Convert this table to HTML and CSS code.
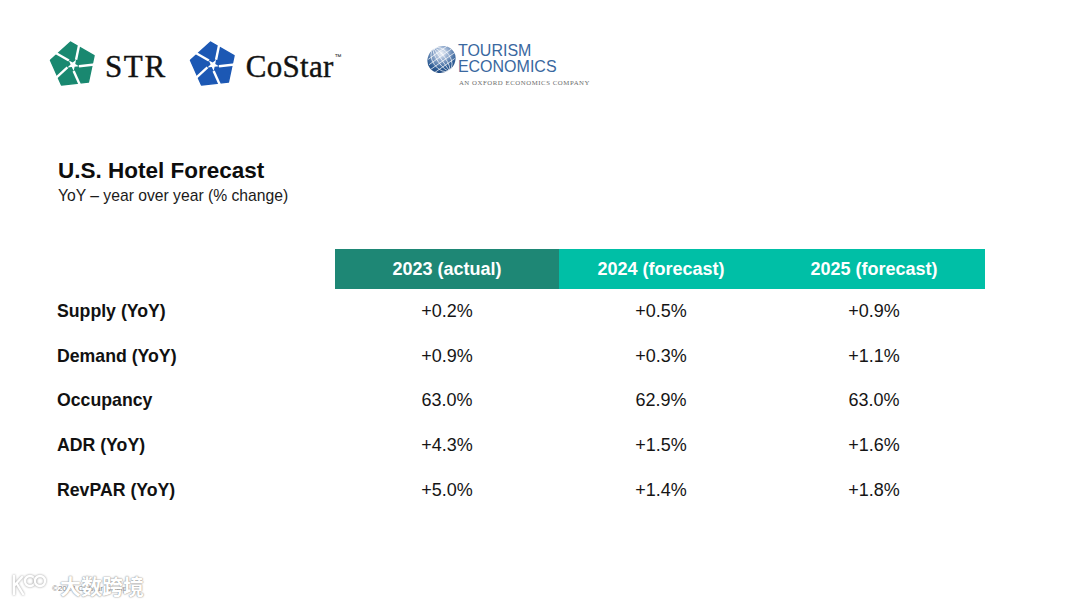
FILE: index.html
```html
<!DOCTYPE html>
<html lang="en">
<head>
<meta charset="utf-8">
<title>U.S. Hotel Forecast</title>
<link rel="stylesheet" href="styles.css">
</head>
<body>
<div class="slide">
  <header class="logos">
    <div class="brand brand-str">
      <svg class="pent" viewBox="-50 -50 100 100" aria-hidden="true">
        <defs>
          <g id="cut">
            <line x1="7.5" y1="-10.3" x2="23.3" y2="-60" />
          </g>
        </defs>
        <g transform="rotate(-6)">
          <polygon class="pent-fill str-fill" points="0,-48 45.65,-14.83 28.21,38.83 -28.21,38.83 -45.65,-14.83" />
          <g class="cuts">
            <use href="#cut" />
            <use href="#cut" transform="rotate(72)" />
            <use href="#cut" transform="rotate(144)" />
            <use href="#cut" transform="rotate(216)" />
            <use href="#cut" transform="rotate(288)" />
          </g>
          <polygon class="star" transform="scale(0.85)" points="8.82,-12.14 5.71,-1.85 14.27,4.64 3.53,4.85 0,15 -3.53,4.85 -14.27,4.64 -5.71,-1.85 -8.82,-12.14 0,-6" />
        </g>
      </svg>
      <span class="brand-name str-name">STR</span>
    </div>
    <div class="brand brand-costar">
      <svg class="pent" viewBox="-50 -50 100 100" aria-hidden="true">
        <g transform="rotate(-6)">
          <polygon class="pent-fill costar-fill" points="0,-48 45.65,-14.83 28.21,38.83 -28.21,38.83 -45.65,-14.83" />
          <g class="cuts">
            <use href="#cut" />
            <use href="#cut" transform="rotate(72)" />
            <use href="#cut" transform="rotate(144)" />
            <use href="#cut" transform="rotate(216)" />
            <use href="#cut" transform="rotate(288)" />
          </g>
          <polygon class="star" transform="scale(0.85)" points="8.82,-12.14 5.71,-1.85 14.27,4.64 3.53,4.85 0,15 -3.53,4.85 -14.27,4.64 -5.71,-1.85 -8.82,-12.14 0,-6" />
        </g>
      </svg>
      <span class="brand-name costar-name">CoStar<sup class="tm">™</sup></span>
    </div>
    <div class="brand brand-te">
      <div class="te-top">
        <svg class="globe" viewBox="0 0 32 32" aria-hidden="true">
          <defs>
            <radialGradient id="gl" cx="0.62" cy="0.3" r="0.8">
              <stop offset="0" stop-color="#f2f5fa" />
              <stop offset="0.3" stop-color="#9bb2d2" />
              <stop offset="0.7" stop-color="#2f5d95" />
              <stop offset="1" stop-color="#1d4479" />
            </radialGradient>
            <clipPath id="gc"><ellipse cx="16" cy="16" rx="15" ry="13.5" transform="rotate(-35 16 16)" /></clipPath>
          </defs>
          <ellipse cx="16" cy="16" rx="15" ry="13.5" transform="rotate(-35 16 16)" fill="url(#gl)" />
          <g clip-path="url(#gc)" class="grid" transform="rotate(-35 16 16)">
            <ellipse cx="16" cy="16" rx="4" ry="14" />
            <ellipse cx="16" cy="16" rx="9" ry="14" />
            <line x1="16" y1="1" x2="16" y2="31" />
            <line x1="0" y1="8" x2="32" y2="8" />
            <line x1="0" y1="13" x2="32" y2="13" />
            <line x1="0" y1="18" x2="32" y2="18" />
            <line x1="0" y1="23" x2="32" y2="23" />
          </g>
        </svg>
        <div class="te-words">
          <span>TOURISM</span>
          <span>ECONOMICS</span>
        </div>
      </div>
      <div class="te-sub">AN OXFORD ECONOMICS COMPANY</div>
    </div>
  </header>

  <section class="heading">
    <h1 class="title">U.S. Hotel Forecast</h1>
    <p class="subtitle">YoY – year over year (% change)</p>
  </section>

  <div class="table">
    <div class="th blank"></div>
    <div class="th dark">2023 (actual)</div>
    <div class="th light">2024 (forecast)</div>
    <div class="th light">2025 (forecast)</div>

    <div class="label">Supply (YoY)</div>
    <div class="val">+0.2%</div>
    <div class="val">+0.5%</div>
    <div class="val">+0.9%</div>

    <div class="label">Demand (YoY)</div>
    <div class="val">+0.9%</div>
    <div class="val">+0.3%</div>
    <div class="val">+1.1%</div>

    <div class="label">Occupancy</div>
    <div class="val">63.0%</div>
    <div class="val">62.9%</div>
    <div class="val">63.0%</div>

    <div class="label">ADR (YoY)</div>
    <div class="val">+4.3%</div>
    <div class="val">+1.5%</div>
    <div class="val">+1.6%</div>

    <div class="label">RevPAR (YoY)</div>
    <div class="val">+5.0%</div>
    <div class="val">+1.4%</div>
    <div class="val">+1.8%</div>
  </div>

  <footer class="footer">©2024 CoStar Group</footer>

  <div class="watermark" aria-hidden="true">
    <svg class="wm-logo" viewBox="0 0 40 26">
      <path d="M6 4 V22 M6 14 L14 5 M9 12 L15 22" />
      <circle cx="22" cy="9" r="5" />
      <circle cx="32" cy="9" r="5" />
    </svg>
    <span class="wm-text">大数跨境</span>
  </div>
</div>
</body>
</html>
```

FILE: styles.css
```css
* { box-sizing: border-box; }

html, body {
  margin: 0;
  padding: 0;
  background: #ffffff;
}

body {
  font-family: "Liberation Sans", Arial, sans-serif;
  color: #111111;
}

.slide {
  position: relative;
  width: 1080px;
  height: 608px;
  overflow: hidden;
  background: #ffffff;
}

/* ---------- logos ---------- */
.logos {
  display: flex;
  align-items: flex-start;
  padding: 41px 0 0 49px;
  height: 100px;
}

.brand {
  display: flex;
  align-items: center;
}

.pent {
  width: 48px;
  height: 48px;
  display: block;
}

.pent-fill { stroke-linejoin: round; }
.str-fill { fill: #198870; stroke: #198870; stroke-width: 3; }
.costar-fill { fill: #1c58b4; stroke: #1c58b4; stroke-width: 3; }

.cuts line,
.cuts use {
  stroke: #ffffff;
  stroke-width: 5;
}

.star { fill: #ffffff; }

.brand-name {
  font-family: "Liberation Serif", "Times New Roman", serif;
  font-size: 31px;
  color: #121212;
  line-height: 1;
  -webkit-text-stroke: 0.4px #121212;
}

.str-name {
  margin-left: 8px;
  letter-spacing: 1.6px;
  padding-top: 3px;
}

.brand-costar { margin-left: 22px; }

.costar-name {
  margin-left: 9px;
  letter-spacing: 0.3px;
  padding-top: 3px;
}

.tm {
  font-family: "Liberation Sans", Arial, sans-serif;
  font-size: 7px;
  vertical-align: top;
  position: relative;
  top: 2px;
  margin-left: 1px;
  -webkit-text-stroke: 0;
}

.brand-te {
  margin-left: 84px;
  flex-direction: column;
  align-items: flex-start;
  padding-top: 2px;
}

.te-top {
  display: flex;
  align-items: center;
}

.globe {
  width: 31px;
  height: 31px;
  display: block;
}

.grid ellipse,
.grid line {
  fill: none;
  stroke: #ffffff;
  stroke-width: 0.8;
  opacity: 0.85;
}

.te-words {
  display: flex;
  flex-direction: column;
  margin-left: 1px;
  font-family: "Liberation Sans", Arial, sans-serif;
  font-size: 16px;
  line-height: 16px;
  color: #3a68a0;
}

.te-sub {
  margin-top: 4px;
  margin-left: 33px;
  font-family: "Liberation Serif", "Times New Roman", serif;
  font-size: 6.8px;
  letter-spacing: 0.55px;
  color: #6d6d6d;
}

/* ---------- heading ---------- */
.heading {
  padding: 58px 0 0 58px;
}

.title {
  margin: 0;
  font-size: 22.5px;
  font-weight: bold;
  line-height: 26px;
  color: #0d0d0d;
}

.subtitle {
  margin: 2px 0 0;
  font-size: 15.7px;
  line-height: 20px;
  color: #1a1a1a;
}

/* ---------- table ---------- */
.table {
  display: grid;
  grid-template-columns: 278px 224px 204px 222px;
  grid-template-rows: 40px;
  grid-auto-rows: 44.7px;
  margin: 43px 0 0 57px;
  width: 928px;
}

.th {
  display: flex;
  align-items: center;
  justify-content: center;
  font-size: 18px;
  font-weight: bold;
  color: #ffffff;
}

.th.blank { background: transparent; }
.th.dark { background: #1e8775; }
.th.light { background: #00bfa6; }

.label {
  display: flex;
  align-items: center;
  font-size: 17.7px;
  font-weight: bold;
  color: #111111;
}

.val {
  display: flex;
  align-items: center;
  justify-content: center;
  font-size: 18px;
  color: #151515;
}

/* ---------- footer & watermark ---------- */
.footer {
  position: absolute;
  left: 52px;
  top: 584px;
  font-size: 8px;
  color: #8a8a8a;
}

.watermark {
  position: absolute;
  left: 8px;
  top: 572px;
  display: flex;
  align-items: center;
}

.wm-logo {
  width: 40px;
  height: 26px;
  display: block;
}

.wm-logo path,
.wm-logo circle {
  fill: none;
  stroke: #ffffff;
  stroke-width: 2.4;
  stroke-linecap: round;
  filter: drop-shadow(0 0 1px #9a9a9a);
}

.wm-text {
  margin-left: 12px;
  font-family: "Noto Sans CJK SC", sans-serif;
  font-weight: bold;
  font-size: 21px;
  line-height: 1;
  color: #ffffff;
  text-shadow: 0 0 1px #8d8d8d, 0 0 2px #9d9d9d;
}
```
